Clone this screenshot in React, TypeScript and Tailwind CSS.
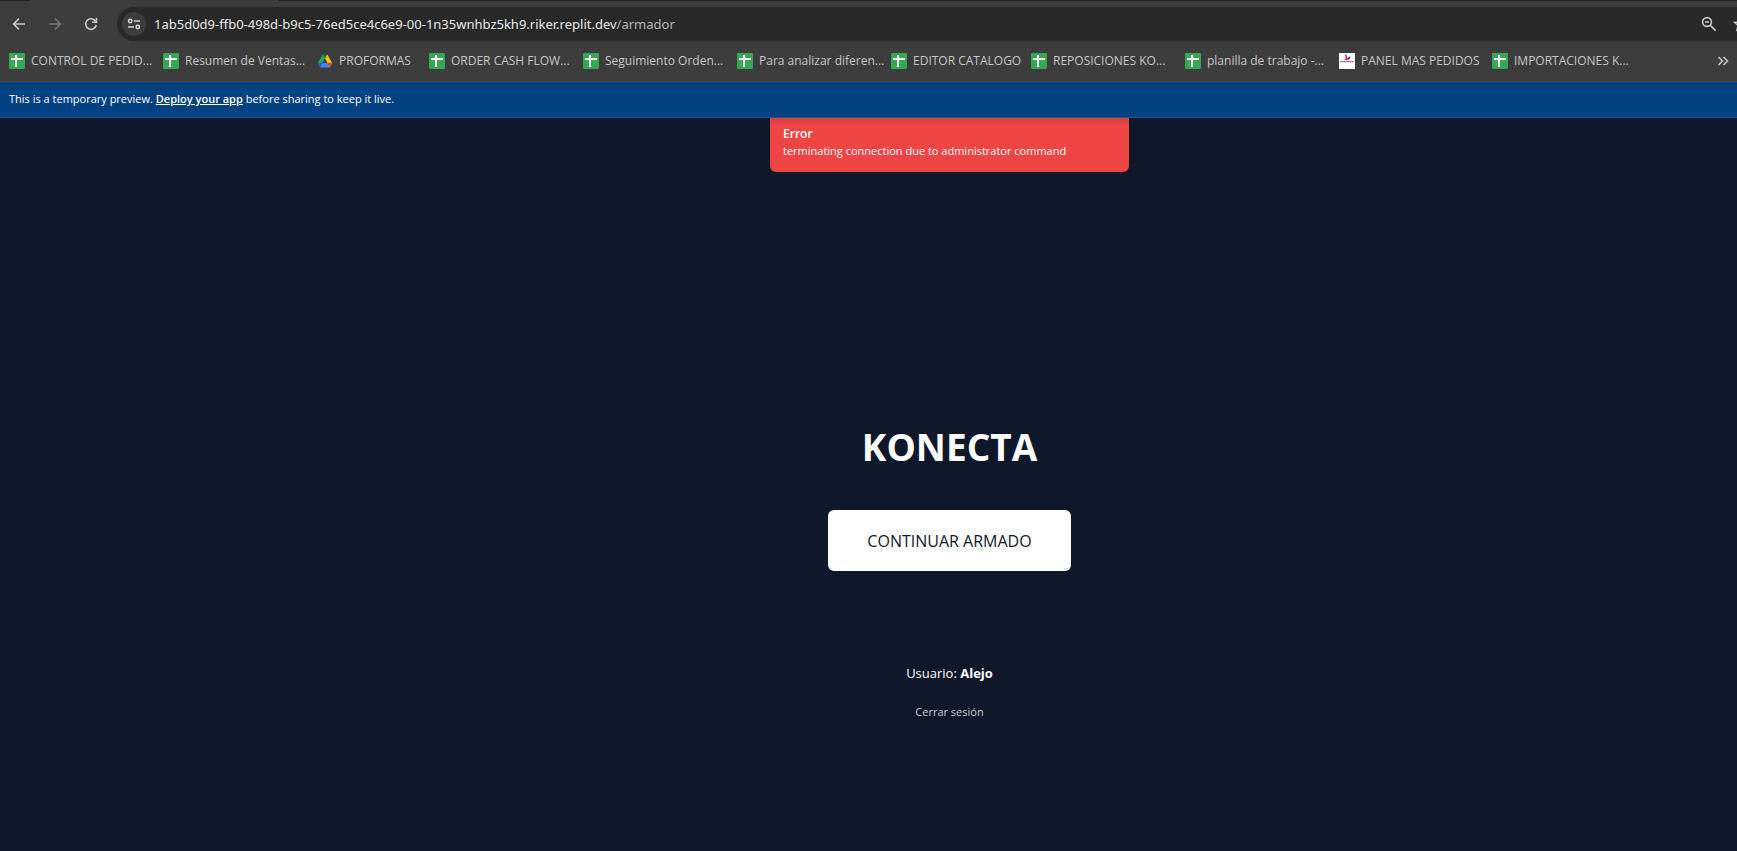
type Bookmark = { label: string; icon: 'sheet' | 'drive' | 'bird'; width: string };

const bookmarks: Bookmark[] = [
  { label: 'CONTROL DE PEDID...', icon: 'sheet', width: 'w-[154px]' },
  { label: 'Resumen de Ventas...', icon: 'sheet', width: 'w-[154px]' },
  { label: 'PROFORMAS', icon: 'drive', width: 'w-[112px]' },
  { label: 'ORDER CASH FLOW...', icon: 'sheet', width: 'w-[154px]' },
  { label: 'Seguimiento Orden...', icon: 'sheet', width: 'w-[154px]' },
  { label: 'Para analizar diferen...', icon: 'sheet', width: 'w-[154px]' },
  { label: 'EDITOR CATALOGO', icon: 'sheet', width: 'w-[140px]' },
  { label: 'REPOSICIONES KO...', icon: 'sheet', width: 'w-[154px]' },
  { label: 'planilla de trabajo -...', icon: 'sheet', width: 'w-[154px]' },
  { label: 'PANEL MAS PEDIDOS', icon: 'bird', width: 'w-[153px]' },
  { label: 'IMPORTACIONES K...', icon: 'sheet', width: 'w-[154px]' },
];

function BookmarkIcon({ kind }: { kind: Bookmark['icon'] }) {
  if (kind === 'drive') {
    return (
      <svg viewBox="0 0 16 16" className="size-4 shrink-0" aria-hidden="true">
        <path d="M5.6 1.4 L8 5.4 L3.2 13.9 L0.9 10 Z" fill="#1fa463" />
        <path d="M5.6 1.4 H10.4 L8 5.4 Z" fill="#188038" />
        <path d="M10.4 1.4 L15.2 10 H10.5 L8 5.4 Z" fill="#fbbc04" />
        <path d="M5.6 10 H15.2 L13 14.4 H3.2 Z" fill="#4285f4" />
        <path d="M0.9 10 H5.6 L3.2 14.4 Z" fill="#1967d2" />
        <path d="M10.5 10 H15.2 L13 14.4 Z" fill="#ea4335" />
      </svg>
    );
  }
  if (kind === 'bird') {
    return (
      <svg viewBox="0 0 16 16" className="size-4 shrink-0" aria-hidden="true">
        <rect width="16" height="16" fill="#fff" />
        <path d="M5.6 1 L7.6 2.2 L8.4 5 L11.4 4 L10.4 6 L8.6 7 L5.2 6.8 L7 5.4 Z" fill="#e6178a" />
        <path d="M8.8 5 L11.6 3.6 L10.8 5.6 L9.4 6.4 Z" fill="#53256b" />
        <path d="M1 8.6 H15" stroke="#a8628a" strokeWidth="1.3" strokeDasharray="1.6 0.3" />
      </svg>
    );
  }
  return (
    <svg viewBox="0 0 16 16" className="size-4 shrink-0" aria-hidden="true">
      <rect width="16" height="16" rx="1.3" fill="#34a853" />
      <path d="M2 5 H14 V7 H8 V14 H6 V7 H2 Z M6 2 H8 V5 H6 Z" fill="#fff" />
    </svg>
  );
}

function Toolbar() {
  return (
    <div className="flex h-[34px] items-center">
      <div className="flex w-[117px] shrink-0 items-center pl-[9px] text-[#c7c7c7]">
        <button type="button" aria-label="Atrás" className="mr-4 flex size-5 items-center justify-center">
          <svg viewBox="0 0 16 16" className="size-4" fill="none" stroke="currentColor" strokeWidth="1.6">
            <path d="M14 8 H3 M8 2.6 L2.6 8 L8 13.4" />
          </svg>
        </button>
        <button type="button" aria-label="Adelante" className="mr-4 flex size-5 items-center justify-center text-[#757575]">
          <svg viewBox="0 0 16 16" className="size-4" fill="none" stroke="currentColor" strokeWidth="1.6">
            <path d="M2 8 H13 M8 2.6 L13.4 8 L8 13.4" />
          </svg>
        </button>
        <button type="button" aria-label="Recargar" className="flex size-5 items-center justify-center">
          <svg viewBox="0 0 16 16" className="size-4" fill="none" stroke="currentColor" strokeWidth="1.6">
            <path d="M13.2 9 A5.3 5.3 0 1 1 12.2 4.8 L13 5.8" />
            <path d="M13.4 1.8 V6.2 H9" />
          </svg>
        </button>
      </div>
      <div className="flex h-full min-w-0 flex-1 items-center rounded-l-full bg-[#282828] pl-[5px]">
        <button type="button" aria-label="Información del sitio" className="flex size-6 shrink-0 items-center justify-center rounded-full bg-[#3c3c3c] text-[#d5d5d5]">
          <svg viewBox="0 0 14 14" className="size-3.5" fill="none" stroke="currentColor" strokeWidth="1.5">
            <circle cx="3.2" cy="4" r="1.7" />
            <path d="M7 4 H13 M1 10 H7" />
            <circle cx="10.8" cy="10" r="1.7" />
          </svg>
        </button>
        <p className="ml-2 flex-1 truncate font-['Noto_Sans',sans-serif] text-[13px] leading-5 text-[#e8e8e8]">
          1ab5d0d9-ffb0-498d-b9c5-76ed5ce4c6e9-00-1n35wnhbz5kh9.riker.replit.dev<span className="text-[#b5b5b5]">/armador</span>
        </p>
        <div className="flex w-9 shrink-0 items-center gap-4 overflow-hidden text-[#c7c7c7]">
          <button type="button" aria-label="Zoom" className="shrink-0">
            <svg viewBox="0 0 16 16" className="size-4" fill="none" stroke="currentColor" strokeWidth="1.6">
              <circle cx="6" cy="6" r="4.4" />
              <path d="M9.4 9.4 L14.6 14.6 M4 6 H8" />
            </svg>
          </button>
          <button type="button" aria-label="Favorito" className="shrink-0">
            <svg viewBox="0 0 16 16" className="size-4" fill="none" stroke="currentColor" strokeWidth="1.5">
              <path d="M8 1.8 L9.9 6 L14.4 6.4 L11 9.4 L12 13.9 L8 11.5 L4 13.9 L5 9.4 L1.6 6.4 L6.1 6 Z" />
            </svg>
          </button>
        </div>
      </div>
    </div>
  );
}

function BookmarksBar() {
  return (
    <nav className="flex h-[41px] items-center border-b border-[#4a4a4a] pl-[9px]">
      {bookmarks.map((b) => (
        <a key={b.label} href="#" className={`flex shrink-0 items-center gap-1.5 whitespace-nowrap text-xs text-[#c7c7c7] ${b.width}`}>
          <BookmarkIcon kind={b.icon} />
          {b.label}
        </a>
      ))}
      <button type="button" aria-label="Más favoritos" className="mr-2 ml-auto shrink-0 text-[#c7c7c7]">
        <svg viewBox="0 0 12 12" className="size-3" fill="none" stroke="currentColor" strokeWidth="1.6">
          <path d="M1.5 2 L5.5 6 L1.5 10 M6.5 2 L10.5 6 L6.5 10" />
        </svg>
      </button>
    </nav>
  );
}

export default function App() {
  return (
    <div className="flex min-h-screen flex-col overflow-hidden bg-[#0f172a] font-['Open_Sans','Noto_Sans',sans-serif] text-white">
      <header className="bg-[#3c3c3c]">
        <div className="mb-1.5 flex h-px bg-[#1f1f1f]">
          <div className="ml-[30px] w-[248px] bg-[#3c3c3c]" />
        </div>
        <Toolbar />
        <BookmarksBar />
      </header>
      <p className="h-9 border-b border-[#1c568f] bg-[#004182] pl-[9px] text-[11px] leading-[34px]">
        This is a temporary preview.{' '}
        <a href="#" className="font-semibold underline">Deploy your app</a>{' '}
        before sharing to keep it live.
      </p>
      <main className="flex flex-1 flex-col items-center pl-[162px]">
        <div role="alert" className="h-[54px] w-[359px] rounded-b-md bg-linear-to-b from-[#d43f3f] to-[#ef4444] to-15% px-[13px] pt-[7px]">
          <p className="text-xs leading-[18px] font-semibold">Error</p>
          <p className="text-[11px] leading-4">terminating connection due to administrator command</p>
        </div>
        <h1 className="mt-[251px] text-[37px] leading-[48px] font-bold">KONECTA</h1>
        <button type="button" className="mt-[39px] h-[61px] w-[243px] rounded-md bg-white text-base font-medium text-[#0f172a]">
          CONTINUAR ARMADO
        </button>
        <p className="mt-[92px] text-[13px] leading-5">
          Usuario: <strong className="font-bold">Alejo</strong>
        </p>
        <button type="button" className="mt-[21px] text-[11px] leading-4 font-medium text-[#cbcbcb]">
          Cerrar sesión
        </button>
      </main>
    </div>
  );
}
